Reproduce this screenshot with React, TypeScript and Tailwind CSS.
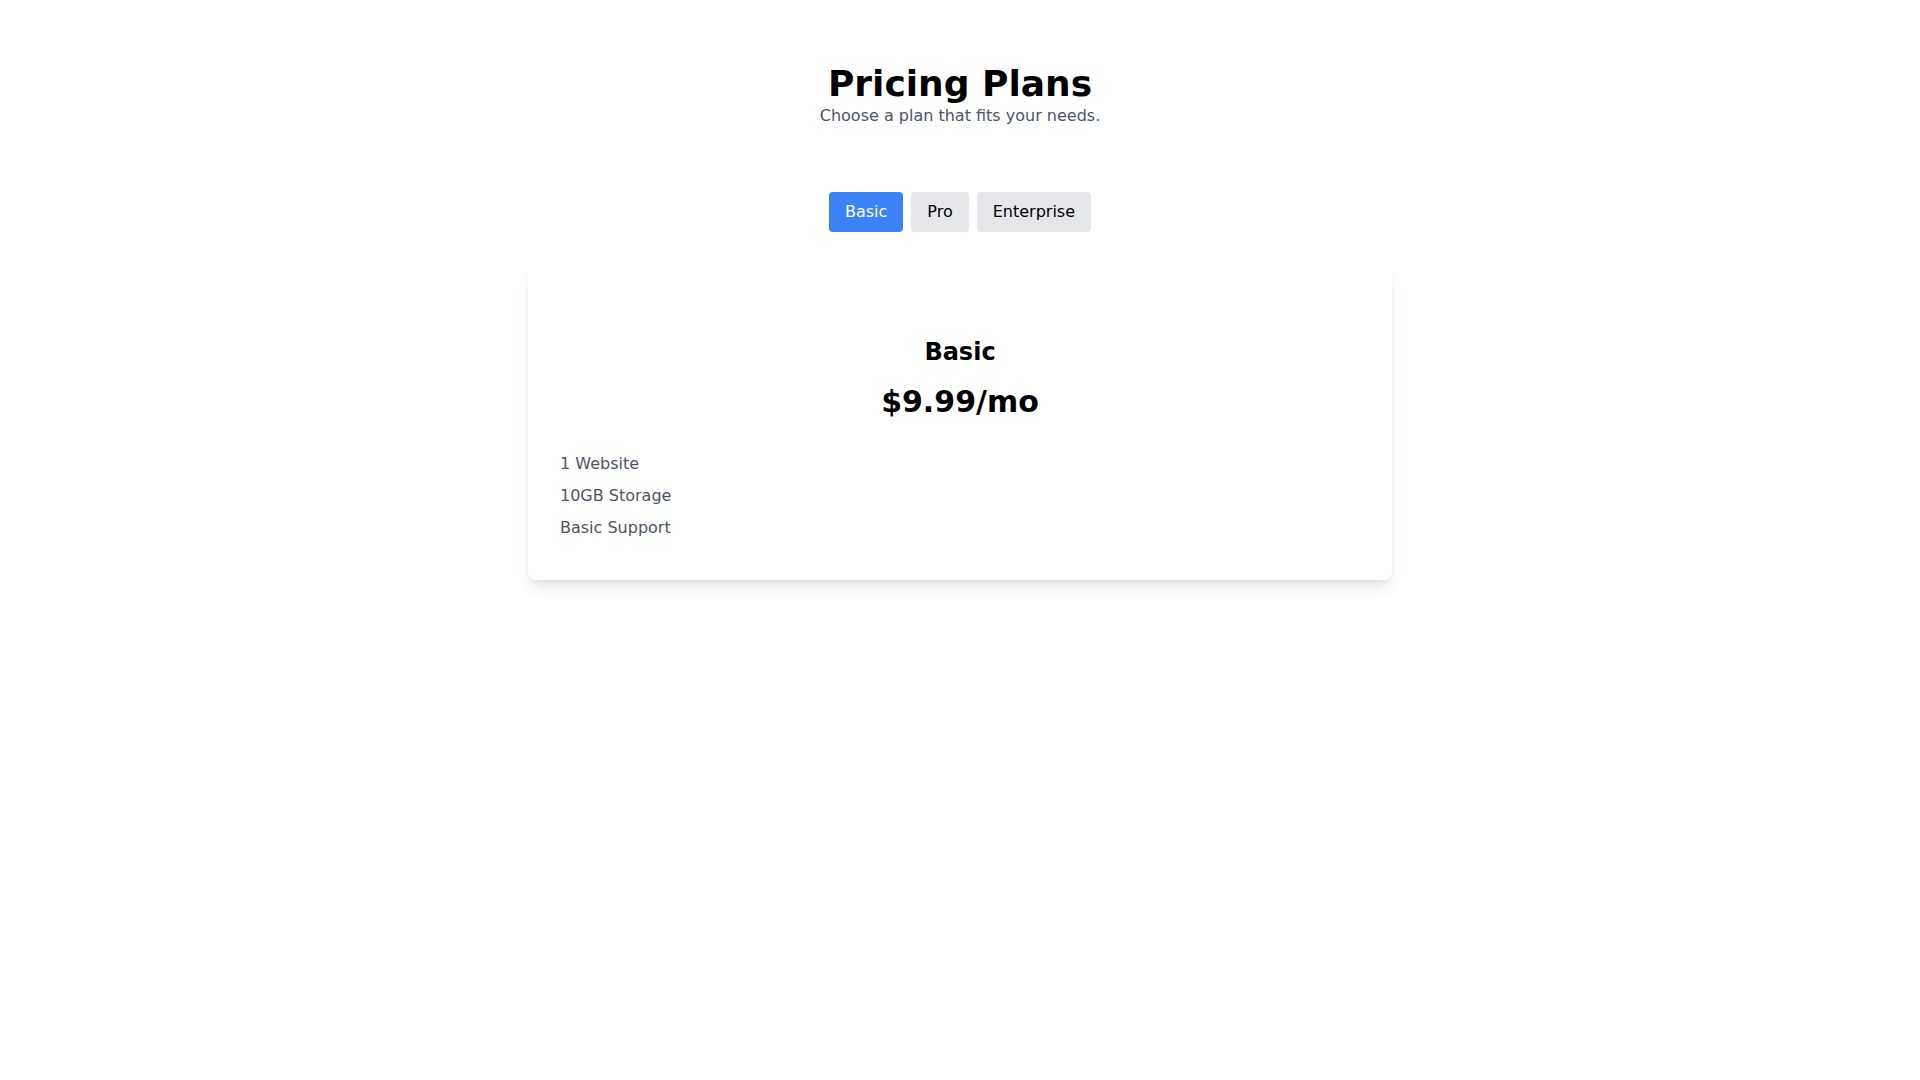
import { useState } from "react";

const plans = [
  {
    name: "Basic",
    price: "$9.99/mo",
    features: ["1 Website", "10GB Storage", "Basic Support"],
  },
  {
    name: "Pro",
    price: "$19.99/mo",
    features: ["5 Websites", "50GB Storage", "Priority Support"],
  },
  {
    name: "Enterprise",
    price: "$49.99/mo",
    features: ["Unlimited Websites", "500GB Storage", "24/7 Support"],
  },
];

export default function App() {
  const [active, setActive] = useState(0);
  const plan = plans[active];

  return (
    <div className="min-h-screen bg-white font-['DejaVu_Sans',sans-serif] text-black">
      <div className="max-w-4xl mx-auto px-4 py-16">
        <div className="text-center mb-16">
          <h1 className="text-4xl font-bold">Pricing Plans</h1>
          <p className="text-base text-[#4b5563]">Choose a plan that fits your needs.</p>
        </div>

        <div className="flex justify-center gap-2 mb-8">
          {plans.map((p, i) => (
            <button
              key={p.name}
              onClick={() => setActive(i)}
              className={
                i === active
                  ? "px-4 py-2 rounded bg-[#3b82f6] text-white"
                  : "px-4 py-2 rounded bg-[#e5e7eb] text-black"
              }
            >
              {p.name}
            </button>
          ))}
        </div>

        <div className="bg-white rounded-lg shadow-lg p-8">
          <div className="text-center mt-10">
            <h2 className="text-2xl font-bold mb-4">{plan.name}</h2>
            <p className="text-3xl font-bold mb-8">{plan.price}</p>
          </div>
          <ul>
            {plan.features.map((f) => (
              <li key={f} className="text-[#4b5563] mb-2">
                {f}
              </li>
            ))}
          </ul>
        </div>
      </div>
    </div>
  );
}
